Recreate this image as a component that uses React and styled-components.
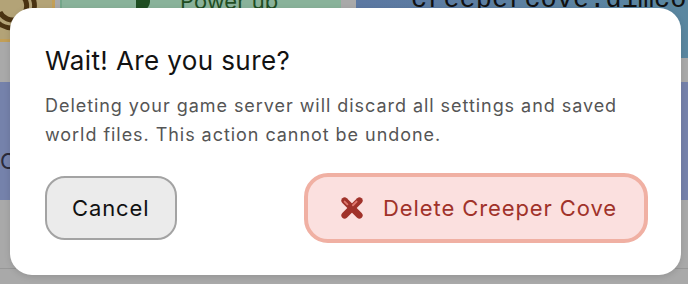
import React from 'react';
import styled, { createGlobalStyle } from 'styled-components';

const GlobalStyle = createGlobalStyle`
  html, body {
    margin: 0;
    padding: 0;
    background: #a8a8a8;
  }
  body {
    font-family: Inter, "Noto Sans", sans-serif;
  }
`;

const Page = styled.div`
  position: relative;
  width: 688px;
  height: 284px;
  overflow: hidden;
  background: #a9a9a9;
`;

// dimmed page content behind the dialog
const Backdrop = styled.div`
  display: flex;
  flex-direction: column;
  height: 100%;
`;

const TopRow = styled.div`
  display: flex;
  align-items: flex-start;
  height: 82px;
`;

const TanCard = styled.div`
  width: 52px;
  height: 39px;
  background: #b3a377;
  border-right: 3px solid #c29f57;
  border-bottom: 3px solid #c29f57;
  position: relative;
  overflow: hidden;
`;

const Swirl = styled.svg`
  position: absolute;
  left: -18px;
  top: -22px;
`;

const GreenCard = styled.div`
  margin-left: 5px;
  width: 281px;
  height: 60px;
  background: #89b29a;
  border-left: 2px solid #74a68a;
  display: flex;
  align-items: flex-start;
  gap: 30px;
  padding-left: 74px;
  box-sizing: border-box;
`;

const PowerIcon = styled.div`
  width: 14px;
  height: 22px;
  margin-top: -10px;
  background: #1f4d22;
  border-radius: 0 12px 12px 0;
`;

const PowerText = styled.span`
  margin-top: -12px;
  font-size: 22px;
  color: #1f4d22;
`;

const BlueCard = styled.div`
  margin-left: 15px;
  flex: 1;
  height: 58px;
  background: linear-gradient(90deg, #5c78a2, #5a87a0);
  padding-left: 55px;
  box-sizing: border-box;
  overflow: hidden;
`;

const Host = styled.span`
  display: block;
  margin-top: -15px;
  font-family: "Liberation Mono", monospace;
  font-size: 27px;
  color: #111;
  white-space: nowrap;
`;

const MidRow = styled.div`
  display: flex;
  justify-content: space-between;
  height: 118px;
`;

const PurpleCard = styled.div`
  width: ${p => p.$w}px;
  background: #7582ab;
  display: flex;
  align-items: center;
  padding-top: 40px;
  box-sizing: border-box;
  font-size: 22px;
  color: #2a2a3a;
`;

const BottomLine = styled.div`
  margin-top: 68px;
  border-top: 1px solid #979797;
`;

const Dialog = styled.div`
  position: absolute;
  left: 10px;
  top: 8px;
  width: 671px;
  height: 267px;
  box-sizing: border-box;
  background: #fff;
  border-radius: 22px;
  padding: 37px 33px 0 35px;
  box-shadow: 0 2px 6px rgba(0, 0, 0, 0.12);
`;

const Title = styled.h2`
  margin: 0;
  font-size: 26px;
  font-weight: 400;
  line-height: 32px;
  letter-spacing: 0.4px;
  color: #121212;
`;

const Message = styled.p`
  margin: 15px 0 0;
  font-size: 18px;
  line-height: 28.5px;
  color: #555;
  letter-spacing: 0.95px;
`;

const Actions = styled.div`
  display: flex;
  justify-content: space-between;
  align-items: center;
  margin-top: 24px;
`;

const Button = styled.button`
  display: flex;
  align-items: center;
  justify-content: center;
  gap: 19px;
  box-sizing: border-box;
  font-family: inherit;
  font-size: 22px;
  letter-spacing: 0.9px;
  cursor: pointer;
  height: ${p => (p.$danger ? 70 : 64)}px;
  padding: 0 ${p => (p.$danger ? 27 : 25)}px 0 ${p => (p.$danger ? 32 : 25)}px;
  border-radius: ${p => (p.$danger ? 24 : 20)}px;
  border: ${p => (p.$danger ? '4px solid #f0b0a3' : '2px solid #a3a3a3')};
  background: ${p => (p.$danger ? '#fbe0df' : '#ebebeb')};
  color: ${p => (p.$danger ? '#a0322a' : '#111')};
`;

const CrossIcon = () => (
  <svg width="24" height="24" viewBox="0 0 26 26">
    <g strokeLinecap="round">
      <line x1="5" y1="5" x2="21" y2="21" stroke="#a0322a" strokeWidth="7" />
      <line x1="21" y1="5" x2="5" y2="21" stroke="#a0322a" strokeWidth="7" />
      <line x1="18" y1="6" x2="14" y2="10" stroke="#e07a70" strokeWidth="2" />
      <line x1="5" y1="6" x2="8" y2="9" stroke="#e07a70" strokeWidth="2" />
    </g>
  </svg>
);

export default function App() {
  return (
    <Page>
      <GlobalStyle />
      <Backdrop>
        <TopRow>
          <TanCard>
            <Swirl width="60" height="60" viewBox="0 0 60 60">
              <path
                d="M30 6 A22 22 0 1 1 12 40 M30 14 A14 14 0 1 1 18 34"
                fill="none"
                stroke="#4a3312"
                strokeWidth="5"
              />
            </Swirl>
          </TanCard>
          <GreenCard>
            <PowerIcon />
            <PowerText>Power up</PowerText>
          </GreenCard>
          <BlueCard>
            <Host>creepercove.dimcore</Host>
          </BlueCard>
        </TopRow>
        <MidRow>
          <PurpleCard $w={120}>C</PurpleCard>
          <PurpleCard $w={140} />
        </MidRow>
        <BottomLine />
      </Backdrop>

      <Dialog role="dialog">
        <Title>Wait! Are you sure?</Title>
        <Message>
          Deleting your game server will discard all settings and saved
          world files. This action cannot be undone.
        </Message>
        <Actions>
          <Button>Cancel</Button>
          <Button $danger>
            <CrossIcon />
            Delete Creeper Cove
          </Button>
        </Actions>
      </Dialog>
    </Page>
  );
}
